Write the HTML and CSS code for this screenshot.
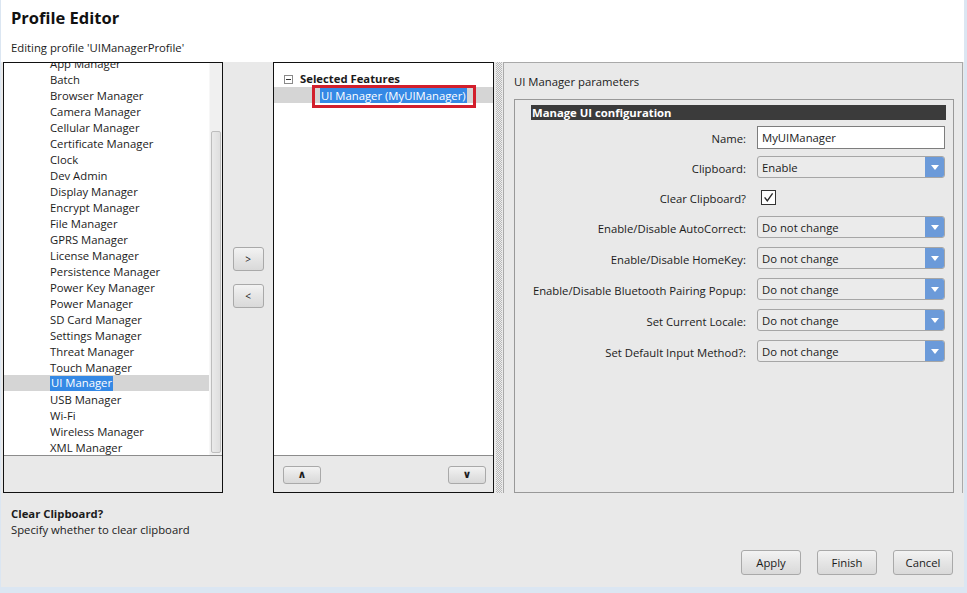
FILE: index.html
```html
<!DOCTYPE html>
<html>
<head>
<meta charset="utf-8">
<title>Profile Editor</title>
<link rel="stylesheet" href="styles.css">
</head>
<body>
<div class="window">
  <header class="header">
    <h1 class="title">Profile Editor</h1>
    <p class="subtitle">Editing profile 'UIManagerProfile'</p>
  </header>

  <main class="main">
    <section class="panel left-panel">
      <div class="list-box">
        <div class="list-scroll">
          <ul class="feature-list">
            <li>App Manager</li>
            <li>Batch</li>
            <li>Browser Manager</li>
            <li>Camera Manager</li>
            <li>Cellular Manager</li>
            <li>Certificate Manager</li>
            <li>Clock</li>
            <li>Dev Admin</li>
            <li>Display Manager</li>
            <li>Encrypt Manager</li>
            <li>File Manager</li>
            <li>GPRS Manager</li>
            <li>License Manager</li>
            <li>Persistence Manager</li>
            <li>Power Key Manager</li>
            <li>Power Manager</li>
            <li>SD Card Manager</li>
            <li>Settings Manager</li>
            <li>Threat Manager</li>
            <li>Touch Manager</li>
            <li class="selected"><span class="hl">UI Manager</span></li>
            <li>USB Manager</li>
            <li>Wi-Fi</li>
            <li>Wireless Manager</li>
            <li>XML Manager</li>
          </ul>
        </div>
        <div class="vscroll"><div class="thumb"></div></div>
      </div>
      <div class="panel-foot"></div>
    </section>

    <div class="mover">
      <button class="btn move-btn">&gt;</button>
      <button class="btn move-btn">&lt;</button>
    </div>

    <section class="panel mid-panel">
      <div class="list-box tree">
        <div class="tree-root"><span class="toggle"></span><span class="tree-label">Selected Features</span></div>
        <div class="tree-row selected"><span class="mark"><span class="hl">UI Manager (MyUIManager)</span></span></div>
      </div>
      <div class="panel-foot order-foot">
        <button class="btn order-btn">&#8743;</button>
        <button class="btn order-btn">&#8744;</button>
      </div>
    </section>

    <div class="splitter"></div>

    <section class="params">
      <div class="params-title">UI Manager parameters</div>
      <div class="group">
        <div class="group-head">Manage UI configuration</div>
        <div class="form">
          <div class="row row-name">
            <label class="lbl">Name:</label>
            <div class="input">MyUIManager</div>
          </div>
          <div class="row row-clip">
            <label class="lbl">Clipboard:</label>
            <div class="select"><span class="sel-text">Enable</span><span class="sel-arrow"></span></div>
          </div>
          <div class="row row-check">
            <label class="lbl">Clear Clipboard?</label>
            <div class="control">
              <span class="checkbox"><svg width="13" height="13" viewBox="0 0 13 13"><path d="M2.6 6.4 L5.3 9.8 L10.6 2.4" fill="none" stroke="#2a2a2a" stroke-width="1.4"/></svg></span>
            </div>
          </div>
          <div class="row row-after-check">
            <label class="lbl">Enable/Disable AutoCorrect:</label>
            <div class="select"><span class="sel-text">Do not change</span><span class="sel-arrow"></span></div>
          </div>
          <div class="row">
            <label class="lbl">Enable/Disable HomeKey:</label>
            <div class="select"><span class="sel-text">Do not change</span><span class="sel-arrow"></span></div>
          </div>
          <div class="row">
            <label class="lbl">Enable/Disable Bluetooth Pairing Popup:</label>
            <div class="select"><span class="sel-text">Do not change</span><span class="sel-arrow"></span></div>
          </div>
          <div class="row">
            <label class="lbl">Set Current Locale:</label>
            <div class="select"><span class="sel-text">Do not change</span><span class="sel-arrow"></span></div>
          </div>
          <div class="row">
            <label class="lbl">Set Default Input Method?:</label>
            <div class="select"><span class="sel-text">Do not change</span><span class="sel-arrow"></span></div>
          </div>
        </div>
      </div>
    </section>
  </main>

  <div class="help">
    <div class="help-title">Clear Clipboard?</div>
    <div class="help-text">Specify whether to clear clipboard</div>
  </div>

  <div class="actions">
    <button class="btn action-btn">Apply</button>
    <button class="btn action-btn">Finish</button>
    <button class="btn action-btn">Cancel</button>
  </div>
</div>
</body>
</html>
```

FILE: styles.css
```css
* { box-sizing: border-box; }

html, body {
  margin: 0;
  padding: 0;
}

body {
  width: 967px;
  height: 593px;
  overflow: hidden;
  background: #dbe6f2;
  font-family: "Open Sans", "Noto Sans", sans-serif;
  font-size: 11.3px;
  color: #1b1b1b;
}

.window {
  width: 963px;
  height: 587px;
  margin-left: 1px;
  background: #e9e9e9;
  display: flex;
  flex-direction: column;
}

/* Header */
.header {
  height: 62px;
  background: #ffffff;
  padding: 8px 0 0 10px;
}

.title {
  margin: 0;
  font-size: 16.5px;
  line-height: 20px;
  font-weight: 700;
  color: #111;
}

.subtitle {
  margin: 12px 0 0 0;
  line-height: 16px;
  font-size: 11.3px;
}

/* Main area */
.main {
  height: 431px;
  display: flex;
  padding-left: 2px;
}

.panel {
  border: 1px solid #111;
  display: flex;
  flex-direction: column;
  height: 431px;
}

.left-panel { width: 220px; }
.mid-panel { width: 221px; }

.list-box {
  height: 393px;
  background: #fff;
  border-bottom: 1px solid #8c8c8c;
  display: flex;
  overflow: hidden;
}

.panel-foot {
  flex: 1;
  background: #e9e9e9;
}

.list-scroll {
  flex: 1;
  overflow: hidden;
}

.feature-list {
  list-style: none;
  margin: -7px 0 0 0;
  padding: 0;
}

.feature-list li {
  height: 16px;
  line-height: 16px;
  padding-left: 46px;
  white-space: nowrap;
}

.feature-list li.selected {
  background: #d5d5d5;
  margin-top: -1px;
  margin-bottom: 1px;
  padding-top: 1px;
}

.feature-list li.selected .hl {
  display: inline-block;
  line-height: 14px;
  height: 15px;
  vertical-align: top;
}

.hl {
  background: #3589e5;
  color: #fff;
  padding: 0 1px;
}

.vscroll {
  width: 13px;
  background: #f0f0f0;
  border-left: 1px solid #f7f7f7;
  padding: 68px 1px 1px 1px;
}

.thumb {
  height: 322px;
  background: linear-gradient(to right, #eaeaea, #dedede);
  border: 1px solid #bdbdbd;
  border-radius: 2px;
}

/* Mover buttons */
.mover {
  width: 50px;
  display: flex;
  flex-direction: column;
  align-items: center;
  padding-top: 185px;
  gap: 13px;
}

.btn {
  font-family: "Open Sans", "Noto Sans", sans-serif;
  font-size: 11.3px;
  color: #1b1b1b;
  background: linear-gradient(#f3f3f3, #e5e5e5 50%, #d9d9d9);
  border: 1px solid #a9a9a9;
  border-radius: 3px;
  padding: 0;
  margin: 0;
}

.move-btn {
  width: 31px;
  height: 24px;
  font-size: 10px;
  line-height: 22px;
}

/* Tree */
.tree {
  flex-direction: column;
  padding-top: 8px;
}

.tree-root {
  height: 16px;
  display: flex;
  align-items: center;
  padding-left: 10px;
}

.toggle {
  width: 9px;
  height: 9px;
  border: 1px solid #8a8a8a;
  position: relative;
  margin-right: 7px;
  background: #fff;
}

.toggle::after {
  content: "";
  position: absolute;
  left: 1px;
  right: 1px;
  top: 3px;
  height: 1px;
  background: #333;
}

.tree-label {
  font-weight: 700;
  line-height: 16px;
}

.tree-row {
  height: 16px;
  display: flex;
  align-items: flex-start;
}

.tree-row.selected {
  background: #d5d5d5;
}

.mark {
  margin: -2px 0 -5px 38px;
  border: 3px solid #d21f2c;
  padding: 0 6px 2px 5px;
  height: 23px;
  display: block;
}

.mark .hl {
  display: block;
  line-height: 15px;
  height: 15px;
  padding: 0 1px;
  white-space: nowrap;
}

.order-foot {
  display: flex;
  justify-content: space-between;
  align-items: flex-start;
  padding: 10px 7px 0 9px;
}

.order-btn {
  width: 38px;
  height: 18px;
  font-size: 11px;
  line-height: 16px;
  font-weight: 700;
  font-family: "DejaVu Sans", sans-serif;
}

/* Splitter */
.splitter {
  width: 9px;
  padding: 0 1px 0 2px;
  height: 431px;
  background-clip: content-box;
  background-image: repeating-conic-gradient(#b9b9b9 0 25%, #ededed 0 50%);
  background-size: 2px 2px;
  background-origin: content-box;
}

/* Params */
.params {
  width: 460px;
  height: 431px;
  border: 1px solid #a9a9a9;
  border-bottom: none;
  padding: 10px 0 0 10px;
}

.params-title {
  line-height: 16px;
  height: 16px;
  padding-top: 1px;
}

.group {
  margin-top: 10px;
  width: 440px;
  height: 394px;
  border: 1px solid #989898;
  padding: 5px 7px 0 16px;
}

.group-head {
  height: 15px;
  line-height: 16px;
  background: #3b3b3b;
  color: #fff;
  font-weight: 700;
  padding-left: 1px;
}

.form {
  margin-top: 6px;
  display: flex;
  flex-direction: column;
  gap: 9px;
}

.row {
  display: flex;
  align-items: center;
  height: 22px;
  gap: 11px;
}

.row-name { height: 23px; }
.row-clip { margin-top: -2px; }
.row-check { margin-top: -1px; }
.row-after-check { margin-top: -1px; }

.lbl {
  width: 215px;
  text-align: right;
  white-space: nowrap;
  padding-top: 2px;
}

.input {
  width: 188px;
  height: 23px;
  background: #fff;
  border: 1px solid #7d7d7d;
  line-height: 22px;
  padding-left: 4px;
}

.select {
  width: 188px;
  height: 22px;
  border: 1px solid #a6a6a6;
  border-radius: 3px;
  background: #ebebeb;
  display: flex;
  overflow: hidden;
}

.sel-text {
  flex: 1;
  line-height: 21px;
  padding-left: 4px;
}

.sel-arrow {
  width: 19px;
  background: #6b9ad9;
  position: relative;
}

.sel-arrow::after {
  content: "";
  position: absolute;
  left: 6px;
  top: 8px;
  border-left: 4px solid transparent;
  border-right: 4px solid transparent;
  border-top: 5px solid #fff;
}

.control {
  width: 188px;
  display: flex;
  align-items: center;
}

.checkbox {
  margin-left: 4px;
  width: 15px;
  height: 15px;
  border: 1px solid #333;
  background: #fff;
  display: flex;
  align-items: center;
  justify-content: center;
}

/* Help */
.help {
  padding: 13px 0 0 10px;
  height: 57px;
}

.help-title {
  font-weight: 700;
  line-height: 16px;
}

.help-text {
  line-height: 16px;
}

.actions {
  display: flex;
  justify-content: flex-end;
  gap: 16px;
  padding-right: 11px;
}

.action-btn {
  width: 60px;
  height: 25px;
  line-height: 23px;
}
```
